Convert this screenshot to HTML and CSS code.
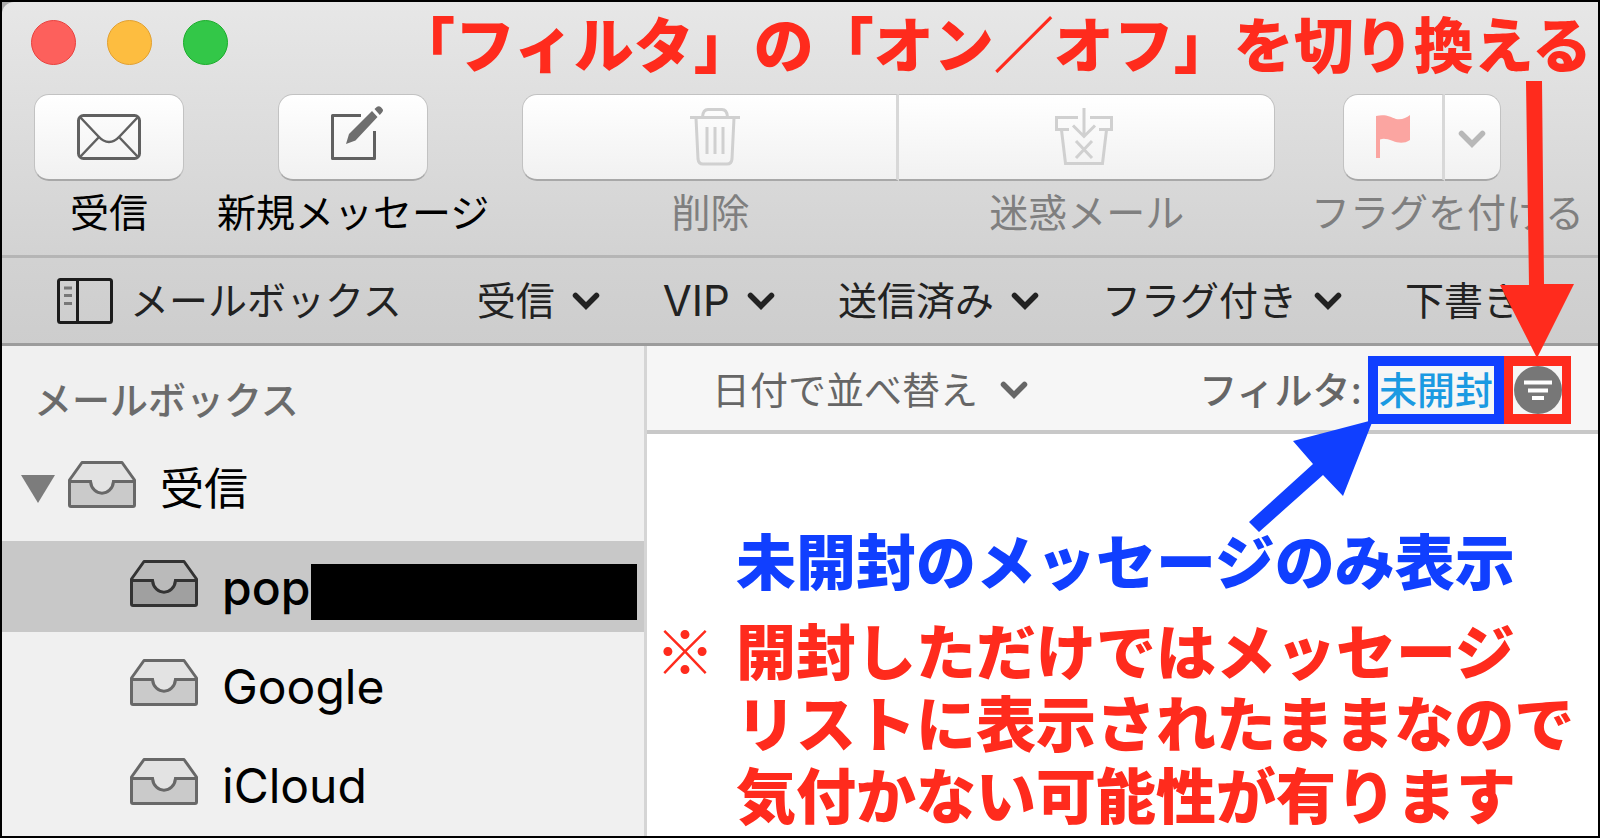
FILE: index.html
```html
<!DOCTYPE html>
<html lang="ja">
<head>
<meta charset="utf-8">
<title>メール</title>
<link rel="stylesheet" href="styles.css">
</head>
<body>
<svg class="defs" aria-hidden="true">
  <symbol id="chevron" viewBox="0 0 28 18"><path d="M3.500 3.500 14 14 24.500 3.500" fill="none" stroke="currentColor" stroke-width="5.500" stroke-linecap="round"/></symbol>
  <symbol id="tray" viewBox="0 0 68 47">
    <path class="tray-top" d="M14 1.500H54L66.500 19V40H1.500V19Z"/>
    <path class="tray-front" d="M1.500 20.500H22.500C24 36 44 36 45.500 20.500H66.500V44Q66.500 45.500 65 45.500H3Q1.500 45.500 1.500 44Z"/>
    <path class="tray-line" d="M1.500 20.500V19L14 1.500H54L66.500 19V20.500"/>
  </symbol>
</svg>
<div class="window">
  <header class="chrome">
    <div class="titlebar">
      <div class="lights">
        <button class="light close" aria-label="閉じる"></button>
        <button class="light minimize" aria-label="しまう"></button>
        <button class="light expand" aria-label="拡大"></button>
      </div>
      <p class="note red">「フィルタ」の「オン／オフ」を切り換える</p>
    </div>
    <div class="toolbar">
      <div class="tool">
        <button class="key" aria-labelledby="t-get">
          <svg width="64" height="46" viewBox="0 0 64 46" fill="none" stroke="#606060" stroke-width="3"><rect x="1.500" y="1.500" width="61" height="43" rx="5"/><path d="M3 3 21 22Q32 34 43 22L61 3M22 23 3 43M42 23 61 43" stroke-width="2.500"/></svg>
        </button>
        <span class="caption" id="t-get">受信</span>
      </div>
      <div class="tool">
        <button class="key compose" aria-labelledby="t-new">
          <svg width="54" height="54" viewBox="0 0 54 54"><path d="M31 9.500H2.500V52.500H44.500V25" fill="none" stroke="#606060" stroke-width="3" stroke-linejoin="round"/><path d="M16 38 19 28 42 5 47.500 11 25.500 34.500ZM44.500 3 47 .8Q49-.5 51 1.200L52.500 3Q53.800 4.500 52 6.500L49.800 9Z" fill="#6e6e6e"/></svg>
        </button>
        <span class="caption" id="t-new">新規メッセージ</span>
      </div>
      <div class="tool wide">
        <div class="keys">
          <button class="key trash" aria-labelledby="t-del" disabled>
            <svg width="50" height="58" viewBox="0 0 50 58" fill="none" stroke="#d0d0d0" stroke-width="3"><path d="M0 9.500H50M12.500 9Q13 1.500 18 1.500H32Q37 1.500 37.500 9M6 10 8 51Q8.500 56 13 56H37Q41.500 56 42 51L44 10M17 19V46M25 19V46M33 19V46"/></svg>
          </button>
          <button class="key junk" aria-labelledby="t-junk" disabled>
            <svg width="58" height="58" viewBox="0 0 58 58" fill="none" stroke="#d0d0d0" stroke-width="3"><path d="M23 9.500H1.500V21.500H14M35 9.500H56.500V21.500H44M6.500 22 10.500 55.500H47.500L51.500 22M29 0V28M18 17.500 29 28.500 40 17.500M21 33 37 50M37 33 21 50"/></svg>
          </button>
        </div>
        <div class="captions dim"><span class="caption" id="t-del">削除</span><span class="caption" id="t-junk">迷惑メール</span></div>
      </div>
      <div class="tool flag">
        <div class="keys">
          <button class="key flag-key" aria-labelledby="t-flag" disabled>
            <svg width="34" height="44" viewBox="0 0 34 44"><path d="M0 1C10-1 14 2 20 4 26 5 30 3 34 0V25C28 29 22 28 17 26 11 24 8 23 4 24.500V43H0Z" fill="#fba5a1"/></svg>
          </button>
          <button class="key arrow-key" aria-label="フラグの色" disabled><svg class="chev"><use href="#chevron"/></svg></button>
        </div>
        <span class="caption dim" id="t-flag">フラグを付ける</span>
      </div>
    </div>
    <nav class="favorites">
      <button class="fav boxes">
        <svg width="56" height="46" viewBox="0 0 56 46" fill="none" stroke="#1c1c1c" stroke-width="3"><rect x="1.500" y="1.500" width="53" height="43" rx="2"/><path d="M20.500 1V45"/><path d="M7 10H15M7 17.500H15M7 25.500H15" stroke="#777"/></svg>
        <span>メールボックス</span>
      </button>
      <button class="fav">受信<svg class="chev"><use href="#chevron"/></svg></button>
      <button class="fav latin">VIP<svg class="chev"><use href="#chevron"/></svg></button>
      <button class="fav">送信済み<svg class="chev"><use href="#chevron"/></svg></button>
      <button class="fav">フラグ付き<svg class="chev"><use href="#chevron"/></svg></button>
      <button class="fav">下書き</button>
    </nav>
  </header>
  <div class="body">
    <aside class="sidebar">
      <h2 class="heading">メールボックス</h2>
      <ul class="list">
        <li><a class="row parent" href="#inbox"><svg class="disclosure" viewBox="0 0 34 28"><path d="M0 0H34L17 28Z" fill="#7c7c7c"/></svg><svg class="tray"><use href="#tray"/></svg>受信</a></li>
        <li><a class="row selected" href="#pop" aria-current="page"><svg class="tray"><use href="#tray"/></svg>pop<span class="redacted"></span></a></li>
        <li><a class="row" href="#google"><svg class="tray"><use href="#tray"/></svg>Google</a></li>
        <li><a class="row" href="#icloud"><svg class="tray"><use href="#tray"/></svg>iCloud</a></li>
      </ul>
    </aside>
    <main class="messages">
      <div class="sortbar">
        <button class="sort">日付で並べ替え<svg class="chev"><use href="#chevron"/></svg></button>
        <div class="filter">
          <span class="filter-label">フィルタ:</span>
          <div class="mark blue-mark">
            <button class="unread">未開封</button>
            <svg class="blue-arrow" width="124" height="112" viewBox="0 0 124 112"><path d="M0 102 64 44 44 21 124 0 94 76 74 55 10 112Z" fill="#103fff"/></svg>
          </div>
          <div class="mark red-mark">
            <button class="toggle" aria-label="フィルタ"><svg width="48" height="48" viewBox="0 0 48 48"><circle cx="24" cy="24" r="24" fill="#777"/><path d="M10 16.500H38M14 24.500H34M18 32H30" stroke="#fff" stroke-width="4"/></svg></button>
            <svg class="red-arrow" width="74" height="277" viewBox="0 0 74 277"><path d="M26 0H42L44 203H74L37 277 0 204H29Z" fill="#ff2b1d"/></svg>
          </div>
        </div>
      </div>
      <div class="notes">
        <p class="note blue">未開封のメッセージのみ表示</p>
        <p class="note red bullet">※</p>
        <p class="note red">開封しただけではメッセージ<br>リストに表示されたままなので<br>気付かない可能性が有ります</p>
      </div>
    </main>
  </div>
</div>
</body>
</html>
```

FILE: styles.css
```css
* { box-sizing: border-box; }
body {
  margin: 0;
  background: #aaa;
  font-family: Inter, "Noto Sans CJK JP", sans-serif;
  font-size: 38px;
  line-height: 40px;
  color: #000;
}
h2, p, ul { margin: 0; padding: 0; }
ul { list-style: none; }
button {
  margin: 0; padding: 0; border: 0; background: none;
  font: inherit; color: inherit; white-space: nowrap;
}
svg { flex: none; }
.defs { position: absolute; width: 0; height: 0; }
.window {
  display: flex; flex-direction: column;
  min-height: 100vh;
  border: 2px solid #000;
}
.chrome {
  background: linear-gradient(#e7e7e7, #d2d2d2 75%, #cdcdcd);
  border-radius: 12px 0 0 0;
  font-size: 39px;
}
.titlebar {
  display: flex; align-items: center; justify-content: space-between;
  height: 80px; padding: 0 6px 0 29px;
}
.lights { display: flex; gap: 31px; }
.light { width: 45px; height: 45px; border-radius: 50%; border: 1px solid; }
.close { background: #fd605c; border-color: #e9403d; }
.minimize { background: #fdbd40; border-color: #e2a02f; }
.expand { background: #33c748; border-color: #1bad2b; }
.note { font-size: 60px; line-height: 72px; font-weight: 900; white-space: nowrap; font-family: "Noto Sans CJK JP", sans-serif; }
.red { color: #ff2b1d; }
.blue { color: #103fff; }
.toolbar {
  display: flex; gap: 33px;
  padding: 12px 14px 22px 32px;
  border-bottom: 3px solid #b5b5b5;
}
.tool { display: flex; flex-direction: column; align-items: center; gap: 12px; }
.key {
  display: flex; align-items: center; justify-content: center;
  width: 150px; height: 87px;
  background: linear-gradient(#fff, #f1f1f1);
  border: 1px solid #c2c2c2; border-bottom: 2px solid #a8a8a8; border-radius: 15px;
}
.compose { padding: 0 0 8px 8px; }
.caption { white-space: nowrap; }
.dim { color: #7f7f7f; }
.wide { flex: 1; align-items: stretch; }
.keys { display: flex; }
.wide .keys, .captions { display: grid; grid-template-columns: 1fr 1fr; text-align: center; }
.wide .key { width: auto; }
.keys .key:first-child { border-radius: 15px 0 0 15px; border-right: 3px solid #d8d8d8; }
.keys .key:last-child { border-radius: 0 15px 15px 0; border-left: 0; }
.trash { padding-left: 12px; }
.junk { padding-right: 4px; }
.flag { align-items: flex-start; margin-left: 3px; }
.flag .keys { margin-left: 32px; }
.keys .flag-key { width: 102px; }
.keys .arrow-key { width: 56px; padding-top: 4px; color: #b8b8b8; }
.chev { width: 28px; height: 18px; }
.favorites {
  display: flex; align-items: center; gap: 63px;
  height: 88px; padding-left: 55px;
  border-bottom: 3px solid #9c9c9c;
  color: #222; overflow: hidden;
}
.fav, .sort { display: flex; align-items: center; gap: 17px; }
.latin { font-size: 42px; }
.boxes { margin-right: 12px; }
.body { display: flex; flex: 1; }
.sidebar { flex: 0 0 645px; padding-top: 34px; background: #f0f0f0; border-right: 3px solid #d5d5d5; }
.heading { padding-left: 32px; font-size: 38px; line-height: 40px; font-weight: 500; color: #6b6b6b; }
.list { display: grid; gap: 8px; padding-top: 22px; }
.row {
  display: flex; align-items: center; height: 91px;
  padding: 2px 7px 0 128px;
  color: #000; text-decoration: none; font-size: 48px;
}
.parent { padding-left: 19px; font-size: 44px; }
.disclosure { width: 34px; height: 28px; margin-right: 13px; }
.tray {
  width: 68px; height: 47px; margin-right: 24px; margin-bottom: 8px;
  --top: #e3e3e3; --front: #cacaca; --line: #686868;
}
.tray-top { fill: var(--top); }
.tray-front { fill: var(--front); stroke: var(--line); stroke-width: 3px; }
.tray-line { fill: none; stroke: var(--line); stroke-width: 3px; stroke-linejoin: round; }
.selected { background: #c8c8c8; font-weight: 500; }
.selected .tray { --top: #bababa; --front: #a0a0a0; --line: #333; }
.redacted { flex: 1; height: 56px; margin-top: 8px; margin-left: 1px; background: #000; }
.messages { flex: 1; background: #fff; }
.sortbar {
  display: flex; align-items: center; justify-content: space-between;
  height: 88px; padding: 4px 27px 0 65px;
  background: #f6f6f6; border-bottom: 4px solid #c8c8c8; color: #666;
}
.sort { gap: 22px; }
.filter { display: flex; align-items: center; }
.filter-label { font-weight: 500; margin-right: 6px; }
.mark { position: relative; display: flex; align-items: center; justify-content: center; height: 68px; border: 10px solid; }
.blue-mark { width: 136px; border-color: #103fff; }
.red-mark { width: 67px; border-color: #ff2b1d; border-width: 10px 9px; }
.unread { color: #1b9ae2; font-weight: 500; }
.toggle { display: flex; }
.blue-arrow { position: absolute; right: 121px; top: 54px; }
.red-arrow { position: absolute; left: -13px; bottom: 56px; }
.notes { display: grid; grid-template-columns: 81px 1fr; row-gap: 18px; padding: 89px 0 0 8px; }
.notes .blue { grid-column: 2; }
.notes .bullet { font-weight: 400; }
```
